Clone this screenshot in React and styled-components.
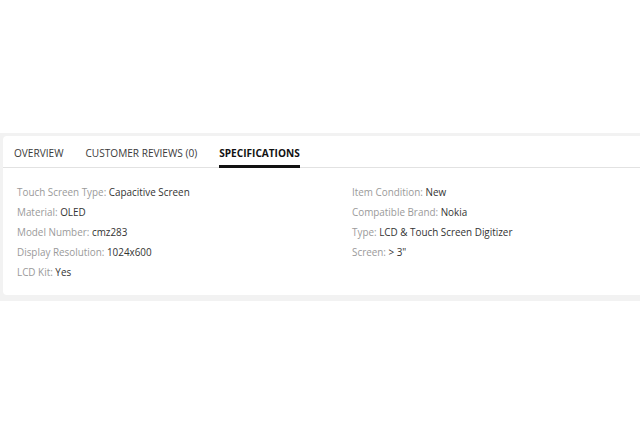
import React from "react";
import styled, { createGlobalStyle } from "styled-components";

const Global = createGlobalStyle`
  html, body { margin: 0; padding: 0; background: #fff; }
  body { font-family: "Open Sans", "Noto Sans", sans-serif; overflow: hidden; }
`;

const Page = styled.div`
  width: 640px;
  height: 437px;
  padding-top: 133px;
  box-sizing: border-box;
  overflow: hidden;
`;

const Frame = styled.section`
  background: #f2f2f2;
  padding: 3px 0 6px 3px;
`;

const Card = styled.div`
  background: #fff;
  border-radius: 4px 0 0 4px;
  height: 159px;
`;

const TabBar = styled.div`
  display: flex;
  gap: 22px;
  padding-left: 11px;
  height: 32px;
  border-bottom: 1px solid #e2e2e2;
  box-sizing: border-box;
`;

const Tab = styled.div`
  display: flex;
  align-items: center;
  font-size: 10.1px;
  color: ${(p) => (p.$active ? "#111" : "#3a3a3a")};
  font-weight: ${(p) => (p.$active ? 700 : 400)};
  text-transform: uppercase;
  border-bottom: 3px solid ${(p) => (p.$active ? "#111" : "transparent")};
  margin-bottom: -1px;
  padding-top: 4px;
  box-sizing: border-box;
`;

const Specs = styled.div`
  display: grid;
  grid-template-columns: 335px 1fr;
  padding: 14px 0 0 14px;
`;

const Column = styled.div`
  display: flex;
  flex-direction: column;
`;

const Row = styled.div`
  font-size: 9.9px;
  line-height: 20px;
  white-space: nowrap;
`;

const Label = styled.span`
  color: #9a9a9a;
`;

const Value = styled.span`
  color: #333;
`;

const left = [
  ["Touch Screen Type", "Capacitive Screen"],
  ["Material", "OLED"],
  ["Model Number", "cmz283"],
  ["Display Resolution", "1024x600"],
  ["LCD Kit", "Yes"],
];

const right = [
  ["Item Condition", "New"],
  ["Compatible Brand", "Nokia"],
  ["Type", "LCD & Touch Screen Digitizer"],
  ["Screen", "> 3\""],
];

export default function App() {
  return (
    <Page>
      <Global />
      <Frame>
        <Card>
          <TabBar>
            <Tab>Overview</Tab>
            <Tab>Customer Reviews (0)</Tab>
            <Tab $active>Specifications</Tab>
          </TabBar>
          <Specs>
            <Column>
              {left.map(([k, v]) => (
                <Row key={k}>
                  <Label>{k}:</Label> <Value>{v}</Value>
                </Row>
              ))}
            </Column>
            <Column>
              {right.map(([k, v]) => (
                <Row key={k}>
                  <Label>{k}:</Label> <Value>{v}</Value>
                </Row>
              ))}
            </Column>
          </Specs>
        </Card>
      </Frame>
    </Page>
  );
}
